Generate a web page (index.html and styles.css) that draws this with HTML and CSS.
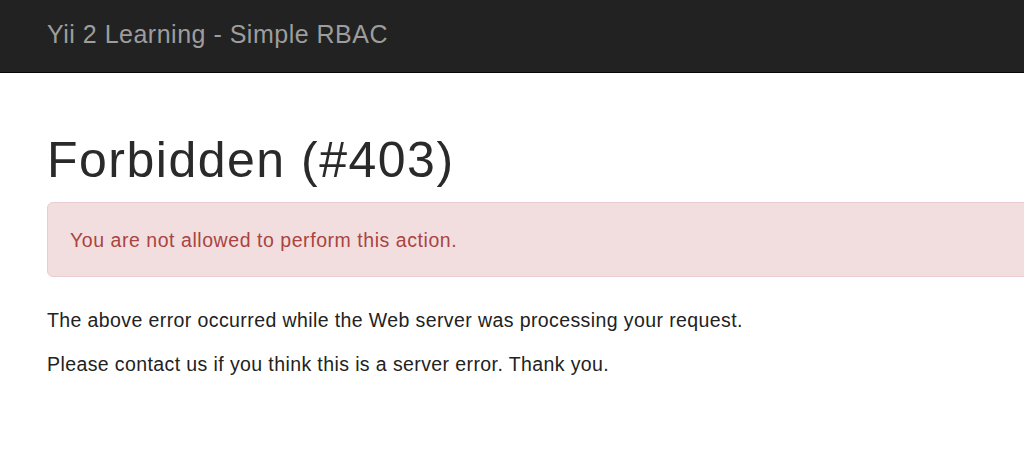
FILE: index.html
```html
<!DOCTYPE html>
<html lang="en">
<head>
<meta charset="utf-8">
<title>Forbidden (#403)</title>
<link rel="stylesheet" href="styles.css">
</head>
<body>
<div class="page">
  <nav class="navbar">
    <a class="brand" href="#">Yii 2 Learning - Simple RBAC</a>
  </nav>
  <main class="content">
    <h1 class="title">Forbidden (#403)</h1>
    <div class="alert">You are not allowed to perform this action.</div>
    <p class="text">The above error occurred while the Web server was processing your request.</p>
    <p class="text">Please contact us if you think this is a server error. Thank you.</p>
  </main>
</div>
</body>
</html>
```
FILE: styles.css
```css
html, body {
  margin: 0;
  padding: 0;
  background: #fff;
}
body {
  font-family: "Liberation Sans", Arial, Helvetica, sans-serif;
  color: #333;
  overflow: hidden;
}
.page {
  overflow: hidden;
}
.navbar {
  height: 72px;
  background: #222;
  border-bottom: 1px solid #080808;
  padding-left: 47px;
  box-sizing: content-box;
}
.brand {
  display: block;
  padding-top: 21.5px;
  font-size: 25px;
  line-height: 25px;
  letter-spacing: 0.5px;
  color: #9d9d9d;
  text-decoration: none;
}
.content {
  padding: 60px 0 0 47px;
  margin-right: -40px;
}
.title {
  margin: 0 0 15px;
  font-size: 50px;
  line-height: 54px;
  font-weight: 500;
  letter-spacing: 1.5px;
  color: #2a2a2a;
}
.alert {
  background: #f2dede;
  border: 1px solid #ebccd1;
  border-radius: 6px;
  color: #a94442;
  font-size: 19.5px;
  line-height: 28px;
  letter-spacing: 0.55px;
  padding: 23px 22px 22px;
  margin-bottom: 29px;
}
.text {
  margin: 0 0 16px;
  font-size: 19.5px;
  line-height: 28px;
  letter-spacing: 0.4px;
  color: #222;
}
```
